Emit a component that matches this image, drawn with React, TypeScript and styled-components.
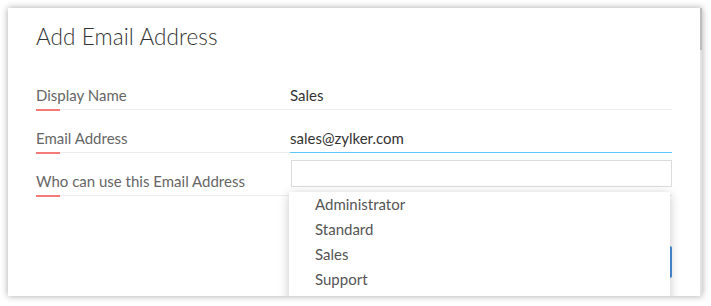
import styled, { createGlobalStyle } from 'styled-components';

const GlobalStyle = createGlobalStyle`
  html, body {
    margin: 0;
    background: #ffffff;
    font-family: Lato, "Open Sans", sans-serif;
  }
`;

const Page = styled.div`
  width: 711px;
  height: 306px;
  box-sizing: border-box;
  padding: 8px 9px 10px 8px;
`;

const Panel = styled.div`
  position: relative;
  height: 100%;
  box-sizing: border-box;
  background: #ffffff;
  box-shadow: 0 0 7px rgba(0, 0, 0, 0.35);
  padding: 14px 30px 0 28px;
  overflow: hidden;
`;

const ScrollTrack = styled.div`
  position: absolute;
  top: 0;
  right: 0;
  width: 2px;
  height: 100%;
  background: #e2e2e2;
`;

const ScrollThumb = styled.div`
  width: 2px;
  height: 42px;
  background: #bdbdbd;
`;

const Title = styled.h1`
  margin: 0;
  font-size: 22.5px;
  font-weight: 300;
  line-height: 30px;
  color: #333333;
  letter-spacing: 0.1px;
`;

const Form = styled.div`
  margin-top: 15px;
`;

const Row = styled.div`
  position: relative;
  display: grid;
  grid-template-columns: 254px 1fr;
  align-items: end;
  box-sizing: border-box;
  height: 43px;
  border-bottom: 1px solid #ececec;
`;

const Label = styled.div`
  position: relative;
  font-size: 15px;
  line-height: 20px;
  padding-bottom: 4px;
  color: #666666;

  &::after {
    content: '';
    position: absolute;
    left: 0;
    bottom: -2px;
    width: 24px;
    height: 2px;
    background: #f47b78;
  }
`;

const Value = styled.div<{ $focused?: boolean }>`
  font-size: 15px;
  line-height: 20px;
  padding-bottom: 4px;
  color: #333333;
  margin-bottom: -1px;
  border-bottom: 1px solid ${(p) => (p.$focused ? '#5cc8f3' : 'transparent')};
`;

const SelectCell = styled.div`
  position: relative;
  align-self: start;
  padding-top: 7px;
`;

const SelectBox = styled.div`
  height: 25px;
  margin-left: 1px;
  border: 1px solid #dcdcdc;
  background: #ffffff;
`;

const Dropdown = styled.ul`
  position: absolute;
  z-index: 2;
  top: 39px;
  left: -1px;
  right: 2px;
  margin: 0;
  padding: 0 0 12px;
  list-style: none;
  background: #ffffff;
  box-shadow: 0 2px 10px rgba(0, 0, 0, 0.22);
`;

const Option = styled.li`
  padding-left: 26px;
  font-size: 15px;
  line-height: 25px;
  color: #555555;
`;

const Footer = styled.div`
  display: flex;
  justify-content: flex-end;
  margin-top: 50px;
`;

const SaveButton = styled.button`
  height: 32px;
  padding: 0 22px;
  border: none;
  border-radius: 2px;
  background: #4a90d9;
  color: #ffffff;
  font-family: inherit;
  font-size: 14px;
`;

const options = ['Administrator', 'Standard', 'Sales', 'Support'];

const App = () => {
  return (
    <>
      <GlobalStyle />
      <Page>
        <Panel>
          <Title>Add Email Address</Title>
          <Form>
            <Row>
              <Label>Display Name</Label>
              <Value>Sales</Value>
            </Row>
            <Row>
              <Label>Email Address</Label>
              <Value $focused>sales@zylker.com</Value>
            </Row>
            <Row>
              <Label>Who can use this Email Address</Label>
              <SelectCell>
                <SelectBox />
                <Dropdown>
                  {options.map((o) => (
                    <Option key={o}>{o}</Option>
                  ))}
                </Dropdown>
              </SelectCell>
            </Row>
          </Form>
          <Footer>
            <SaveButton>Save</SaveButton>
          </Footer>
          <ScrollTrack>
            <ScrollThumb />
          </ScrollTrack>
        </Panel>
      </Page>
    </>
  );
};

export default App;
